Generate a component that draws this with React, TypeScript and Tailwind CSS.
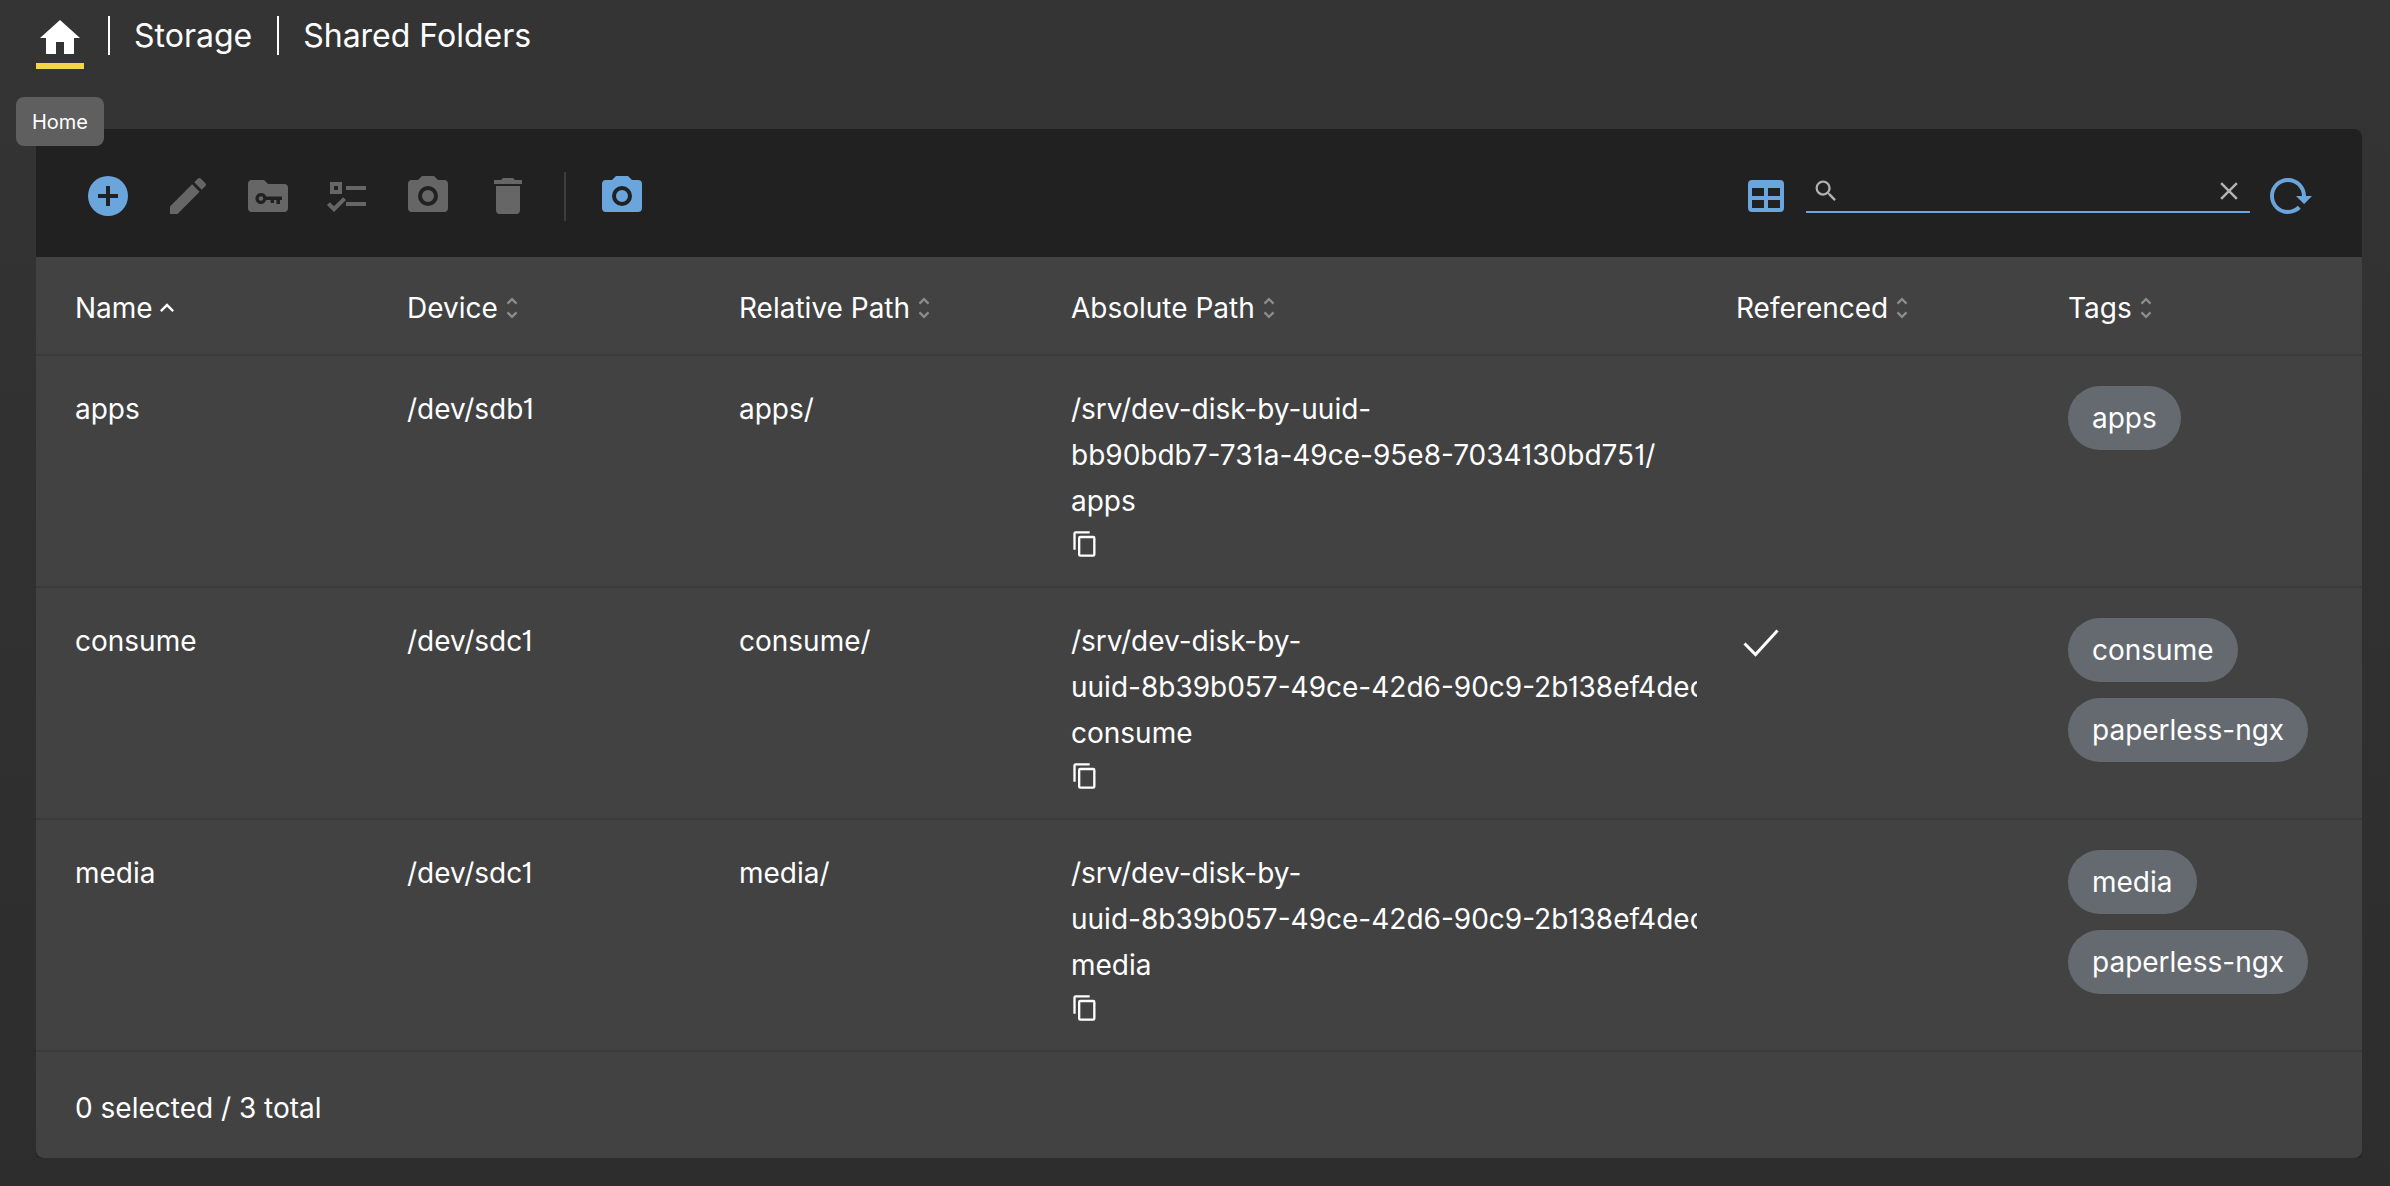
import React from "react";

const columns = "grid grid-cols-[332px_332px_332px_665px_332px_1fr]";

const paths = {
  home: "M10,20V14H14V20H19V12H22L12,3L2,12H5V20H10Z",
  plus: "M17,13H13V17H11V13H7V11H11V7H13V11H17M12,2A10,10 0 0,0 2,12A10,10 0 0,0 12,22A10,10 0 0,0 22,12A10,10 0 0,0 12,2Z",
  pencil: "M20.71,7.04C21.1,6.65 21.1,6 20.71,5.63L18.37,3.29C18,2.9 17.35,2.9 16.96,3.29L15.12,5.12L18.87,8.87M3,17.25V21H6.75L17.81,9.93L14.06,6.18L3,17.25Z",
  list: "M3,5H9V11H3V5M5,7V9H7V7H5M11,7H21V9H11V7M11,15H21V17H11V15M5,20L1.5,16.5L2.91,15.09L5,17.17L9.59,12.59L11,14L5,20Z",
  camera: "M4,4H7L9,2H15L17,4H20A2,2 0 0,1 22,6V18A2,2 0 0,1 20,20H4A2,2 0 0,1 2,18V6A2,2 0 0,1 4,4M12,7A5,5 0 0,0 7,12A5,5 0 0,0 12,17A5,5 0 0,0 17,12A5,5 0 0,0 12,7M12,9A3,3 0 0,1 15,12A3,3 0 0,1 12,15A3,3 0 0,1 9,12A3,3 0 0,1 12,9Z",
  trash: "M19,4H15.5L14.5,3H9.5L8.5,4H5V6H19M6,19A2,2 0 0,0 8,21H16A2,2 0 0,0 18,19V7H6V19Z",
  table: "M5,4H19A2,2 0 0,1 21,6V18A2,2 0 0,1 19,20H5A2,2 0 0,1 3,18V6A2,2 0 0,1 5,4M5,8V12H11V8H5M13,8V12H19V8H13M5,14V18H11V14H5M13,14V18H19V14H13Z",
  search: "M9.5,3A6.5,6.5 0 0,1 16,9.5C16,11.11 15.41,12.59 14.44,13.73L14.71,14H15.5L20.5,19L19,20.5L14,15.5V14.71L13.73,14.44C12.59,15.41 11.11,16 9.5,16A6.5,6.5 0 0,1 3,9.5A6.5,6.5 0 0,1 9.5,3M9.5,5C7,5 5,7 5,9.5C5,12 7,14 9.5,14C12,14 14,12 14,9.5C14,7 12,5 9.5,5Z",
  close: "M19,6.41L17.59,5L12,10.59L6.41,5L5,6.41L10.59,12L5,17.59L6.41,19L12,13.41L17.59,19L19,17.59L13.41,12L19,6.41Z",
  reload: "M2 12C2 16.97 6.03 21 11 21C13.39 21 15.68 20.06 17.4 18.4L15.9 16.9C14.63 18.25 12.86 19 11 19C4.76 19 1.64 11.46 6.05 7.05C10.46 2.64 18 5.77 18 12H15L19 16H19.1L23 12H20C20 7.03 15.97 3 11 3C6.03 3 2 7.03 2 12Z",
  copy: "M19,21H8V7H19M19,5H8A2,2 0 0,0 6,7V21A2,2 0 0,0 8,23H19A2,2 0 0,0 21,21V7A2,2 0 0,0 19,5M16,1H4A2,2 0 0,0 2,3V17H4V3H16V1Z",
  sortUp: "M7.41,15.41L12,10.83L16.59,15.41L18,14L12,8L6,14L7.41,15.41Z",
  sortBoth: "M12,18.17L8.83,15L7.41,16.41L12,21L16.59,16.41L15.17,15M12,5.83L15.17,9L16.58,7.59L12,3L7.41,7.59L8.83,9L12,5.83Z",
};

const Icon = ({ d, className }: { d: string; className: string }) => (
  <svg viewBox="0 0 24 24" fill="currentColor" className={className}>
    <path d={d} />
  </svg>
);

const FolderKey = () => (
  <svg viewBox="0 0 24 24" className="w-[48px] h-[48px] text-[#666666]">
    <path fill="currentColor" d="M10,4L12,6H20A2,2 0 0,1 22,8V18A2,2 0 0,1 20,20H4A2,2 0 0,1 2,18V6A2,2 0 0,1 4,4H10Z" />
    <path
      fill="#212121"
      fillRule="evenodd"
      d="M8.5,10.5A2.75,2.75 0 0,1 11.1,12.25H19V14H18V16H16.2V14H15V15.5H13.3V14H11.1A2.75,2.75 0 1,1 8.5,10.5M8.5,12.1A1.15,1.15 0 1,0 8.5,14.4A1.15,1.15 0 1,0 8.5,12.1Z"
    />
  </svg>
);

const tools = [paths.pencil, null, paths.list, paths.camera, paths.trash];

const headers = ["Name", "Device", "Relative Path", "Absolute Path", "Referenced", "Tags"];

const rows = [
  {
    name: "apps",
    device: "/dev/sdb1",
    relative: "apps/",
    absolute: ["/srv/dev-disk-by-uuid-", "bb90bdb7-731a-49ce-95e8-7034130bd751/", "apps"],
    referenced: false,
    tags: ["apps"],
  },
  {
    name: "consume",
    device: "/dev/sdc1",
    relative: "consume/",
    absolute: ["/srv/dev-disk-by-", "uuid-8b39b057-49ce-42d6-90c9-2b138ef4dec2/", "consume"],
    referenced: true,
    tags: ["consume", "paperless-ngx"],
  },
  {
    name: "media",
    device: "/dev/sdc1",
    relative: "media/",
    absolute: ["/srv/dev-disk-by-", "uuid-8b39b057-49ce-42d6-90c9-2b138ef4dec2/", "media"],
    referenced: false,
    tags: ["media", "paperless-ngx"],
  },
];

const App = () => {
  return (
    <div className="relative h-[1186px] overflow-hidden bg-gradient-to-b from-[#343434] to-[#2d2d2d] pl-[36px] pr-[28px] text-[28px] leading-[46px] text-white font-['Inter',sans-serif] [font-feature-settings:'cv01']">
      <nav className="flex items-start h-[129px]">
        <div className="w-[48px] pt-[14px]">
          <Icon d={paths.home} className="w-[48px] h-[48px] text-white" />
          <div className="mt-px h-[6px] bg-[#f5d547]" />
        </div>
        <div className="ml-[24px] mt-[16px] h-[39px] w-[2px] bg-white" />
        <span className="ml-[24px] mt-[13px] text-[32px]">Storage</span>
        <div className="ml-[25px] mt-[16px] h-[39px] w-[2px] bg-white" />
        <span className="ml-[24px] mt-[13px] text-[32px]">Shared Folders</span>
      </nav>

      <div className="absolute left-[16px] top-[97px] z-10 flex h-[49px] w-[88px] items-center justify-center rounded-[8px] bg-[#5f5f5f] text-[20px] leading-none">
        Home
      </div>

      <main className="h-[1029px] overflow-hidden">
        <div className="rounded-[8px] overflow-hidden bg-[#424242] shadow-[0_4px_8px_rgba(0,0,0,0.25)]">
          <div className="flex h-[128px] items-center justify-between bg-[#212121] pl-[48px] pr-[48px] pt-[6px]">
            <div className="flex items-center gap-[32px]">
              <Icon d={paths.plus} className="w-[48px] h-[48px] text-[#6aa5dc]" />
              {tools.map((d, index) =>
                d ? (
                  <Icon key={index} d={d} className="w-[48px] h-[48px] text-[#666666]" />
                ) : (
                  <FolderKey key={index} />
                )
              )}
              <div className="h-[49px] w-[2px] bg-[#3d3d3d]" />
              <Icon d={paths.camera} className="w-[48px] h-[48px] text-[#6aa5dc]" />
            </div>
            <div className="flex items-center gap-[16px]">
              <Icon d={paths.table} className="w-[48px] h-[48px] text-[#6aa5dc]" />
              <div className="mb-[3px] flex h-[37px] w-[444px] items-center border-b-2 border-[#6aa5dc] pb-[5px] pl-[6px] pr-[6px]">
                <Icon d={paths.search} className="w-[28px] h-[28px] text-[#b0b0b0]" />
                <input className="min-w-0 flex-1 bg-transparent outline-none" />
                <Icon d={paths.close} className="w-[30px] h-[30px] text-[#b0b0b0]" />
              </div>
              <Icon d={paths.reload} className="w-[48px] h-[48px] text-[#6aa5dc]" />
            </div>
          </div>

          <div className={`${columns} h-[99px] items-center border-b-2 border-[#3a3a3a] pt-[5px]`}>
            {headers.map((label, index) => (
              <div key={label} className="flex items-center pl-[39px]">
                <span>{label}</span>
                {index === 0 ? (
                  <Icon d={paths.sortUp} className="w-[28px] h-[28px] text-white" />
                ) : (
                  <Icon d={paths.sortBoth} className="w-[28px] h-[28px] text-[#8c8c8c]" />
                )}
              </div>
            ))}
          </div>

          {rows.map((row) => (
            <div key={row.name} className={`${columns} h-[232px] border-b-2 border-[#3a3a3a] pt-[30px]`}>
              <div className="pl-[39px]">{row.name}</div>
              <div className="pl-[39px]">{row.device}</div>
              <div className="pl-[39px]">{row.relative}</div>
              <div className="overflow-hidden pl-[39px]">
                {row.absolute.map((line) => (
                  <div key={line} className="whitespace-nowrap">
                    {line}
                  </div>
                ))}
                <Icon d={paths.copy} className="mt-[6px] w-[28px] h-[28px] text-white" />
              </div>
              <div className="pl-[39px]">
                {row.referenced && (
                  <svg viewBox="0 0 36 28" className="ml-[7px] mt-[11px] w-[36px] h-[28px]">
                    <path d="M1.5 14.5L12.5 25.5L34.5 1.5" fill="none" stroke="white" strokeWidth="3" />
                  </svg>
                )}
              </div>
              <div className="flex flex-col items-start gap-[16px] pl-[39px]">
                {row.tags.map((tag) => (
                  <span key={tag} className="flex h-[64px] items-center rounded-full bg-[#656a70] px-[24px]">
                    {tag}
                  </span>
                ))}
              </div>
            </div>
          ))}

          <div className="flex h-[106px] items-center pl-[39px] pt-[6px]">0 selected / 3 total</div>
        </div>
      </main>
    </div>
  );
};

export default App;
